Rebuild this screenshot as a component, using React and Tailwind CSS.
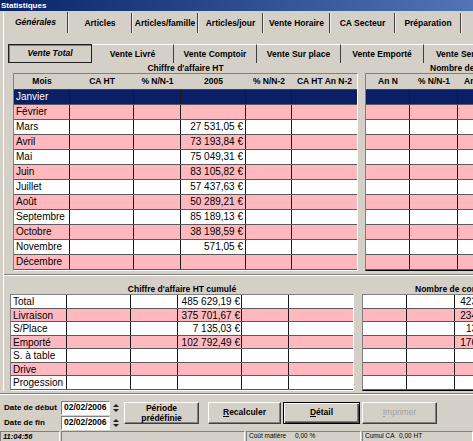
import React from "react";

const months = ["Janvier", "Février", "Mars", "Avril", "Mai", "Juin", "Juillet", "Août", "Septembre", "Octobre", "Novembre", "Décembre"];
const ca2005 = ["", "", "27 531,05 €", "73 193,84 €", "75 049,31 €", "83 105,82 €", "57 437,63 €", "50 289,21 €", "85 189,13 €", "38 198,59 €", "571,05 €", ""];
const nbN1 = ["", "", "312", "648", "661", "693", "574", "538", "652", "371", "", ""];

const cumul = [
  ["Total", "485 629,19 €", "423"],
  ["Livraison", "375 701,67 €", "234"],
  ["S/Place", "7 135,03 €", "13"],
  ["Emporté", "102 792,49 €", "176"],
  ["S. à table", "", ""],
  ["Drive", "", ""],
  ["Progession", "", ""],
];

const tabs = [
  ["Générales", "w-[65px]"],
  ["Articles", "w-[64px]"],
  ["Articles/famille", "w-[66px]"],
  ["Articles/jour", "w-[65px]"],
  ["Vente Horaire", "w-[67px]"],
  ["CA Secteur", "w-[65px]"],
  ["Préparation", "w-[66px]"],
  ["", "w-[30px]"],
];

const subTabs = [
  ["Vente Livré", "w-[82px]"],
  ["Vente Comptoir", "w-[83px]"],
  ["Vente Sur place", "w-[84px]"],
  ["Vente Emporté", "w-[83px]"],
  ["Vente Serv.", "w-[70px]"],
];

function rowBg(i) {
  return i % 2 === 1 ? "bg-[#ffb8bd]" : "bg-white";
}

function Raised({ className = "", children }) {
  return (
    <div className={`flex shrink-0 items-center justify-center border border-t-white border-l-white border-r-[#404040] border-b-[#404040] shadow-[inset_-1px_-1px_0_#808080] ${className}`}>
      {children}
    </div>
  );
}

function MonthRow({ i }) {
  const bg = i === 0 ? "bg-[#0a1f66] text-white" : rowBg(i);
  return (
    <div className={`flex h-[15px] border-b border-[#5a5a5a] leading-[14px] whitespace-nowrap ${bg}`}>
      <div className="w-[56px] border-r border-[#1a1a1a] pl-[2px]">{months[i]}</div>
      <div className="w-[64px] border-r border-[#1a1a1a]" />
      <div className="w-[47px] border-r border-[#1a1a1a]" />
      <div className="w-[65px] border-r border-[#1a1a1a] pr-[2px] text-right">{ca2005[i]}</div>
      <div className="w-[46px] border-r border-[#1a1a1a]" />
      <div className="w-[65px]" />
    </div>
  );
}

function CountRow({ i }) {
  const bg = i === 0 ? "bg-[#0a1f66] text-white" : rowBg(i);
  return (
    <div className={`flex h-[15px] border-b border-[#5a5a5a] leading-[14px] ${bg}`}>
      <div className="w-[44px] border-r border-[#1a1a1a]" />
      <div className="w-[48px] border-r border-[#1a1a1a]" />
      <div className="w-[36px] border-r border-[#1a1a1a] pr-[3px] text-right">{nbN1[i]}</div>
      <div className="w-[60px]" />
    </div>
  );
}

function CumulRow({ i }) {
  const [label, val] = cumul[i];
  return (
    <div className={`flex h-[13.5px] border-b border-[#5a5a5a] leading-[13px] whitespace-nowrap ${rowBg(i)}`}>
      <div className="w-[56px] border-r border-[#1a1a1a] pl-[2px]">{label}</div>
      <div className="w-[64px] border-r border-[#1a1a1a]" />
      <div className="w-[47px] border-r border-[#1a1a1a]" />
      <div className="w-[64px] border-r border-[#1a1a1a] pr-[1px] text-right">{val}</div>
      <div className="w-[47px] border-r border-[#1a1a1a]" />
      <div className="w-[64px]" />
    </div>
  );
}

function CumulCountRow({ i }) {
  return (
    <div className={`flex h-[13.5px] border-b border-[#5a5a5a] leading-[13px] ${rowBg(i)}`}>
      <div className="w-[44px] border-r border-[#1a1a1a]" />
      <div className="w-[48px] border-r border-[#1a1a1a]" />
      <div className="w-[25px] pr-[3px] text-right">{cumul[i][2]}</div>
      <div className="w-[60px]" />
    </div>
  );
}

function Spinner() {
  return (
    <div className="ml-[2px] flex h-[14px] w-[8px] flex-col items-center justify-center gap-[2px]">
      <div className="h-0 w-0 border-x-[3px] border-b-[3px] border-x-transparent border-b-[#222]" />
      <div className="h-0 w-0 border-x-[3px] border-t-[3px] border-x-transparent border-t-[#222]" />
    </div>
  );
}

function DateField({ label }) {
  return (
    <div className="flex h-[14px] items-center">
      <div className="w-[61px] shrink-0 pl-[4px] text-[8px] font-bold whitespace-nowrap">{label}</div>
      <div className="flex h-[14px] w-[49px] shrink-0 items-center border border-t-[#808080] border-l-[#808080] border-r-white border-b-white bg-white pl-[2px] text-[8.5px] font-bold">
        02/02/2006
      </div>
      <Spinner />
    </div>
  );
}

export default function App() {
  return (
    <div className="h-[441px] w-[473px] overflow-hidden bg-[#d4d0c8] font-['Liberation_Sans',Arial,sans-serif] text-black">
      {/* title */}
      <div className="flex h-[11px] items-center bg-gradient-to-r from-[#0a246a] to-[#5275b4] pl-[1px] text-[8px] font-bold leading-none text-white">
        Statistiques
      </div>

      {/* main tabs */}
      <div className="flex h-[22px] pl-[3px] pt-[1px]">
        {tabs.map(([t, w], i) => (
          <div
            key={i}
            className={`flex shrink-0 items-center justify-center border-r border-[#404040] ${i === 0 ? "border-l border-l-white italic" : "mt-[1px] border-l border-l-white/60"} ${w} text-[8.5px] font-bold whitespace-nowrap`}
          >
            {t}
          </div>
        ))}
      </div>

      {/* tab body */}
      <div className="ml-[3px] border-l border-white pt-[11px]">
        {/* sub tabs */}
        <div className="flex h-[19px] pl-[4px]">
          <div className="flex w-[84px] shrink-0 items-center justify-center border border-[#202020] text-[8.5px] font-bold italic shadow-[inset_1px_1px_0_#808080]">
            Vente Total
          </div>
          {subTabs.map(([t, w], i) => (
            <div key={i} className={`flex shrink-0 items-center justify-center border-r border-t border-r-[#404040] border-t-white ${w} text-[8.5px] font-bold whitespace-nowrap`}>
              {t}
            </div>
          ))}
        </div>

        {/* group headers */}
        <div className="flex h-[10px] items-center text-[8.5px] font-bold leading-none">
          <div className="w-[353px] shrink-0 pl-[10px] text-center">Chiffre d'affaire HT</div>
          <div className="shrink-0 pl-[73px] whitespace-nowrap">Nombre de commandes</div>
        </div>

        {/* top tables */}
        <div className="flex gap-[7px] pl-[9px] text-[10px]">
          <div className="w-[345px] shrink-0 border border-t-[#808080] border-l-[#808080] border-r-white border-b-white">
            <div className="flex h-[15px] items-center text-[8.5px] font-bold">
              <div className="w-[56px] text-center">Mois</div>
              <div className="w-[64px] text-center">CA HT</div>
              <div className="w-[47px] text-center">% N/N-1</div>
              <div className="w-[65px] text-center">2005</div>
              <div className="w-[46px] text-center">% N/N-2</div>
              <div className="w-[65px] text-center whitespace-nowrap">CA HT An N-2</div>
            </div>
            <div className="border-t border-[#404040]">
              {months.map((m, i) => (
                <MonthRow key={m} i={i} />
              ))}
            </div>
          </div>
          <div className="w-[200px] shrink-0 border border-t-[#808080] border-l-[#808080]">
            <div className="flex h-[15px] items-center text-[8.5px] font-bold">
              <div className="w-[44px] text-center">An N</div>
              <div className="w-[48px] text-center">% N/N-1</div>
              <div className="w-[36px] pl-[6px] whitespace-nowrap">An N-1</div>
            </div>
            <div className="border-t border-[#404040]">
              {months.map((m, i) => (
                <CountRow key={m} i={i} />
              ))}
            </div>
          </div>
        </div>

        {/* separator */}
        <div className="mt-[3px] h-[2px] border-t border-b border-t-[#808080] border-b-white" />

        {/* cumul headers */}
        <div className="flex h-[18px] items-end pb-[1px] text-[8.5px] font-bold leading-none">
          <div className="w-[349px] shrink-0 pl-[7px] text-center">Chiffre d'affaire HT cumulé</div>
          <div className="shrink-0 pl-[62px] whitespace-nowrap">Nombre de commandes</div>
        </div>

        {/* cumul tables */}
        <div className="flex gap-[8px] pl-[6px] text-[10px]">
          <div className="w-[344px] shrink-0 border border-t-[#808080] border-l-[#808080] border-r-white border-b-white">
            {cumul.map((c, i) => (
              <CumulRow key={c[0]} i={i} />
            ))}
          </div>
          <div className="w-[200px] shrink-0 border border-t-[#808080] border-l-[#808080]">
            {cumul.map((c, i) => (
              <CumulCountRow key={c[0]} i={i} />
            ))}
          </div>
        </div>
      </div>

      {/* bottom separator */}
      <div className="mt-[2px] h-[2px] border-t border-b border-t-[#808080] border-b-white" />

      {/* controls */}
      <div className="flex h-[36px] items-start pt-[6px]">
        <div className="flex shrink-0 flex-col gap-[1px]">
          <DateField label="Date de début" />
          <DateField label="Date de fin" />
        </div>
        <Raised className="ml-[4px] mt-[1px] h-[22px] w-[75px] flex-col text-[8.5px] font-bold leading-[10px]">
          <span>Période</span>
          <span>prédéfinie</span>
        </Raised>
        <Raised className="ml-[9px] mt-[1px] h-[22px] w-[73px] text-[8.5px] font-bold">
          <span><u>R</u>ecalculer</span>
        </Raised>
        <div className="ml-[2px] mt-[1px] flex h-[22px] w-[77px] shrink-0 items-center justify-center border border-black shadow-[inset_1px_1px_0_#fff,inset_-1px_-1px_0_#404040,inset_-2px_-2px_0_#808080] text-[8.5px] font-bold">
          <span><u>D</u>étail</span>
        </div>
        <Raised className="ml-[2px] mt-[1px] h-[22px] w-[75px] text-[8.5px] text-[#a0a0a0]">
          <span><u>I</u>mprimer</span>
        </Raised>
      </div>

      {/* status bar */}
      <div className="flex h-[12px] gap-[1px] text-[6.5px] leading-none">
        <div className="flex w-[60px] items-center border border-t-[#808080] border-l-[#808080] border-r-white border-b-white pl-[2px] text-[7.5px] font-bold italic">
          11:04:56
        </div>
        <div className="w-[184px] border border-t-[#808080] border-l-[#808080] border-r-white border-b-white" />
        <div className="flex w-[115px] items-center border border-t-[#808080] border-l-[#808080] border-r-white border-b-white pl-[2px]">
          <span className="w-[46px]">Coût matière</span>
          <span>0,00 %</span>
        </div>
        <div className="flex flex-1 items-center border border-t-[#808080] border-l-[#808080] border-r-white border-b-white pl-[2px]">
          <span className="w-[34px]">Cumul CA</span>
          <span>0,00 HT</span>
        </div>
      </div>
    </div>
  );
}
